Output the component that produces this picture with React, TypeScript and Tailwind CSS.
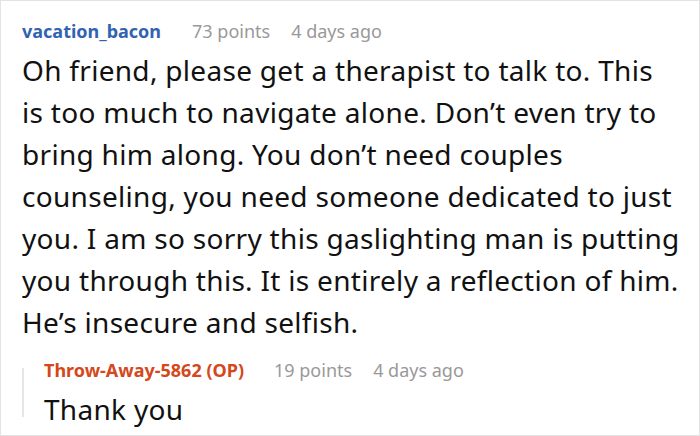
const bodyLines = [
  'Oh friend, please get a therapist to talk to. This',
  'is too much to navigate alone. Don’t even try to',
  'bring him along. You don’t need couples',
  'counseling, you need someone dedicated to just',
  'you. I am so sorry this gaslighting man is putting',
  'you through this. It is entirely a reflection of him.',
  'He’s insecure and selfish.',
];

export default function App() {
  return (
    <div className="w-[700px] h-[436px] bg-white border border-[#e3e3e3] font-['Noto_Sans',sans-serif] pl-[21px] pr-[4px] pt-[18px]">
      <div className="flex items-center h-[24px] text-[18px] leading-[24px]">
        <span className="font-bold text-[#3263b1]">vacation_bacon</span>
        <span className="ml-[31px] text-[#999999]">73 points</span>
        <span className="ml-[21px] text-[#999999]">4 days ago</span>
      </div>
      <p className="mt-[6px] text-[28px] leading-[42px] tracking-[0.3px] text-[#111111] whitespace-nowrap">
        {bodyLines.map((line, i) => (
          <span key={i}>
            {line}
            {i < bodyLines.length - 1 && <br />}
          </span>
        ))}
      </p>
      <div className="mt-[15px] flex">
        <div className="w-[2px] bg-[#e6e6e6] mt-[10px] mb-[13px]" />
        <div className="pl-[20px]">
          <div className="flex items-center h-[24px] text-[18px] leading-[24px]">
            <span className="font-bold text-[#d4481c]">Throw-Away-5862 (OP)</span>
            <span className="ml-[30px] text-[#999999]">19 points</span>
            <span className="ml-[21px] text-[#999999]">4 days ago</span>
          </div>
          <p className="mt-[6px] text-[28px] leading-[42px] tracking-[0.3px] text-[#111111]">Thank you</p>
        </div>
      </div>
    </div>
  );
}
